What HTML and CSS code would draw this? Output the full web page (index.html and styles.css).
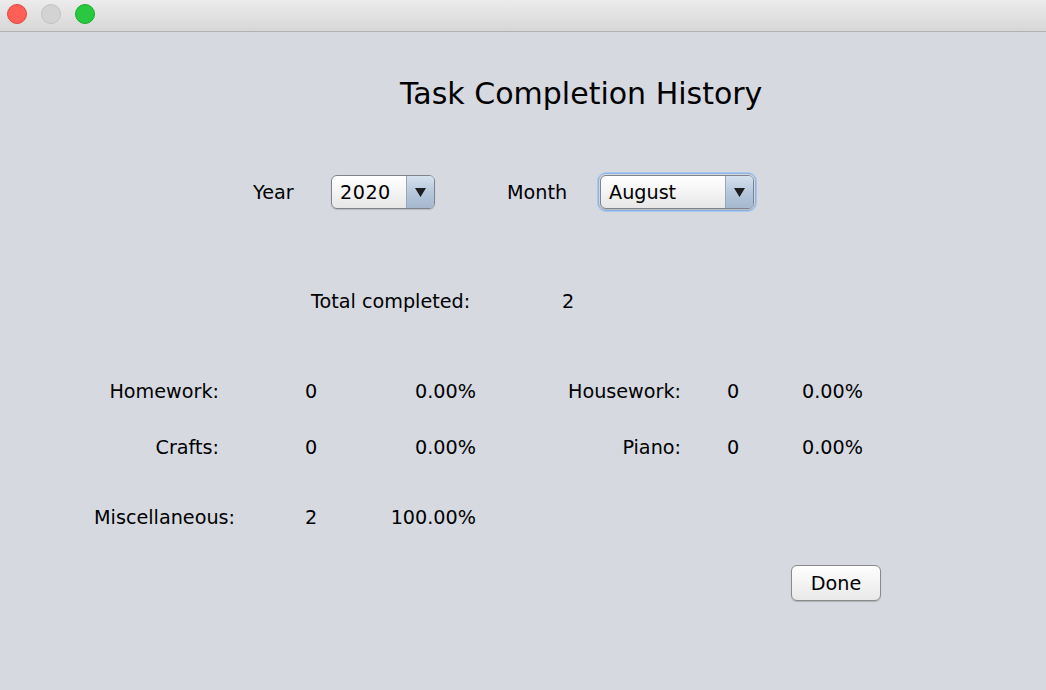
FILE: index.html
```html
<!DOCTYPE html>
<html>
<head>
<meta charset="utf-8">
<link rel="stylesheet" href="styles.css">
</head>
<body>
<div class="window">
  <div class="titlebar">
    <span class="light red"></span>
    <span class="light gray"></span>
    <span class="light green"></span>
  </div>
  <div class="content">
    <h1 class="title">Task Completion History</h1>
    <div class="filters">
      <span class="flabel year-label">Year</span>
      <div class="combo combo-year">
        <span class="combo-text">2020</span>
        <span class="combo-arrow"><svg width="11" height="9" viewBox="0 0 11 9"><path d="M0 0H11L5.5 9Z" fill="#1e1e1e"/></svg></span>
      </div>
      <span class="flabel month-label">Month</span>
      <div class="focus-ring">
        <div class="combo combo-month">
          <span class="combo-text">August</span>
          <span class="combo-arrow"><svg width="11" height="9" viewBox="0 0 11 9"><path d="M0 0H11L5.5 9Z" fill="#1e1e1e"/></svg></span>
        </div>
      </div>
    </div>
    <div class="total">
      <span class="total-label">Total completed:</span>
      <span class="total-value">2</span>
    </div>
    <div class="stats">
      <div class="row row-1">
        <span class="c-label">Homework:</span>
        <span class="c-count">0</span>
        <span class="c-pct">0.00%</span>
        <span class="c-label2">Housework:</span>
        <span class="c-count2">0</span>
        <span class="c-pct2">0.00%</span>
      </div>
      <div class="row row-2">
        <span class="c-label">Crafts:</span>
        <span class="c-count">0</span>
        <span class="c-pct">0.00%</span>
        <span class="c-label2">Piano:</span>
        <span class="c-count2">0</span>
        <span class="c-pct2">0.00%</span>
      </div>
      <div class="row row-3">
        <span class="c-label wide">Miscellaneous:</span>
        <span class="c-count">2</span>
        <span class="c-pct">100.00%</span>
      </div>
    </div>
    <div class="actions">
      <button class="done">Done</button>
    </div>
  </div>
</div>
</body>
</html>
```
FILE: styles.css
```css
* { box-sizing: border-box; }
html, body {
  margin: 0;
  padding: 0;
  width: 1046px;
  height: 690px;
  overflow: hidden;
  background: #d6d9e0;
  font-family: "DejaVu Sans", "Lucida Grande", sans-serif;
  color: #000;
}
.window {
  width: 1046px;
  height: 690px;
  display: flex;
  flex-direction: column;
}
.titlebar {
  height: 32px;
  flex: none;
  background: linear-gradient(#ececec, #d7d7d7);
  border-bottom: 1px solid #b2b2b2;
  display: flex;
  align-items: center;
  padding-left: 7px;
  padding-bottom: 4px;
  gap: 14px;
}
.light {
  width: 20px;
  height: 20px;
  border-radius: 50%;
  display: block;
}
.light.red { background: #fe5f57; border: 1px solid #e2463f; }
.light.gray { background: #d3d3d3; border: 1px solid #c2c2c2; }
.light.green { background: #28c840; border: 1px solid #1aab29; }

.content {
  flex: 1;
  display: flex;
  flex-direction: column;
}
.title {
  margin: 44px 0 0 400px;
  font-weight: normal;
  font-size: 30px;
  line-height: 36px;
  height: 36px;
  white-space: nowrap;
}
.filters {
  margin-top: 62px;
  height: 36px;
  display: flex;
  align-items: center;
  padding-left: 253px;
  font-size: 19.2px;
}
.flabel { white-space: nowrap; }
.year-label { width: 78px; }
.month-label { width: 91px; margin-left: 72px; }
.combo {
  height: 34px;
  display: flex;
  align-items: stretch;
  border: 1px solid #7f848c;
  border-radius: 6px;
  overflow: hidden;
  background: linear-gradient(#ffffff, #f4f4f4 50%, #e6e6e6);
  box-shadow: 0 1px 1px rgba(0,0,0,0.15);
}
.combo-year { width: 104px; }
.combo-month { width: 154px; }
.combo-text {
  flex: 1;
  display: flex;
  align-items: center;
  padding-left: 8px;
  font-size: 19.2px;
  letter-spacing: 0.5px;
}
.combo-month .combo-text { padding-left: 8px; letter-spacing: 0; }
.combo-arrow {
  width: 28px;
  display: flex;
  align-items: center;
  justify-content: center;
  border-left: 1px solid #9aa6b4;
  background: linear-gradient(#d5e1ee, #b7c8dc 50%, #a4b8ce);
}
.focus-ring {
  padding: 1px;
  border-radius: 8px;
  border: 1px solid #8db2e3;
  box-shadow: 0 0 0 1px #a9c6ec;
}
.total {
  margin-top: 80px;
  height: 24px;
  line-height: 24px;
  display: flex;
  font-size: 19.2px;
  padding-left: 311px;
}
.total-label { width: 251px; }
.stats {
  margin-top: 66px;
  display: flex;
  flex-direction: column;
  font-size: 19.2px;
}
.row {
  height: 24px;
  line-height: 24px;
  display: flex;
  white-space: nowrap;
}
.row-2 { margin-top: 32px; }
.row-3 { margin-top: 46px; }
.c-label { width: 235px; text-align: right; padding-right: 16px; }
.c-label.wide { padding-right: 0; }
.c-count { width: 152px; text-align: center; }
.c-pct { width: 89px; text-align: right; }
.c-label2 { width: 205px; text-align: right; }
.c-count2 { width: 104px; text-align: center; }
.c-pct2 { width: 78px; text-align: right; }
.actions {
  margin-top: 35px;
  padding-left: 791px;
  display: flex;
}
.done {
  width: 90px;
  height: 36px;
  font-family: inherit;
  font-size: 19.2px;
  color: #000;
  border: 1px solid #8a8a8a;
  border-radius: 6px;
  background: linear-gradient(#ffffff, #f3f3f3 50%, #e9e9e9);
  box-shadow: 0 1px 1px rgba(0,0,0,0.18);
  padding: 0;
}
```
